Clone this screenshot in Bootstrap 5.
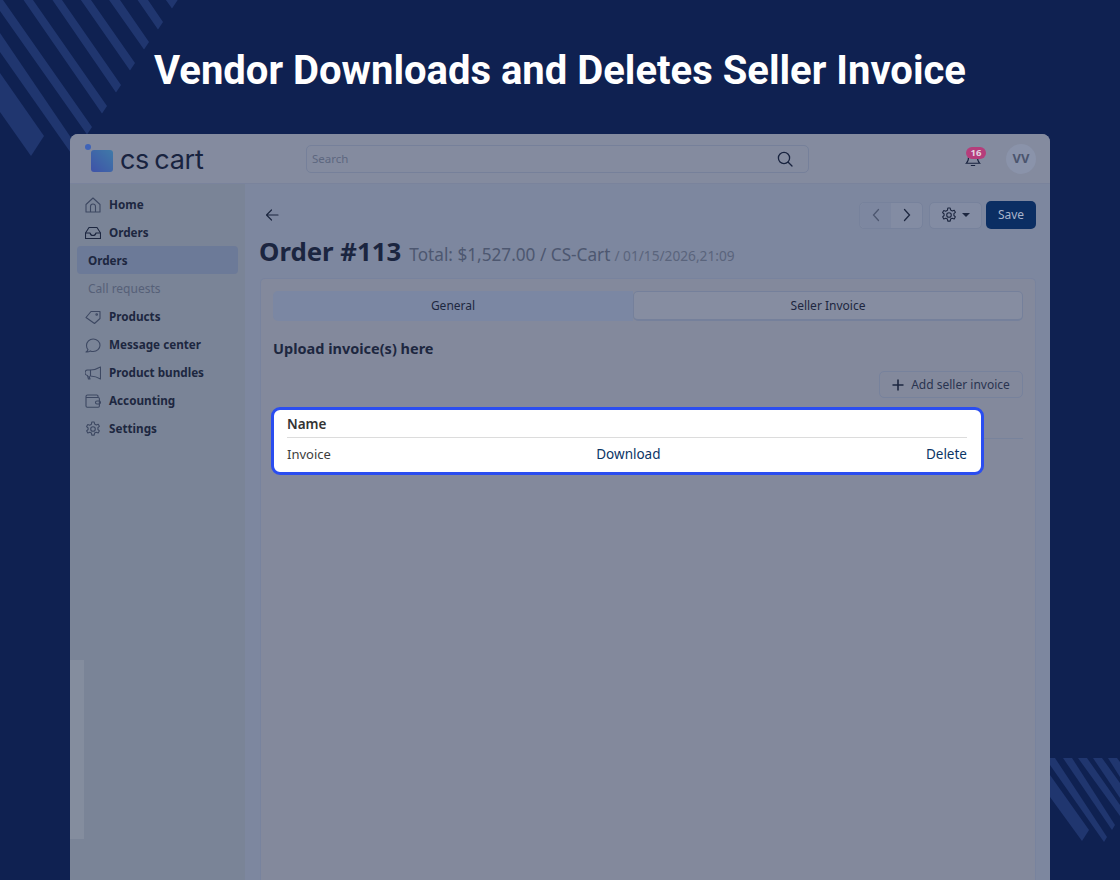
<!DOCTYPE html>
<html lang="en">
<head>
  <meta charset="UTF-8" />
  <meta name="viewport" content="width=device-width, initial-scale=1" />
  <title>Vendor Downloads and Deletes Seller Invoice</title>
  <link href="https://cdn.jsdelivr.net/npm/bootstrap@5.3.0/dist/css/bootstrap.min.css" rel="stylesheet" />
  <style>
    html, body { height: 880px; overflow: hidden; }
    body { background: #0f2151; font-family: "Noto Sans", sans-serif; position: relative; color: #1d2740; }
    svg { display: block; flex: none; }
    .deco { position: absolute; left: 0; top: 0; }
    .deco polygon { fill: #20366f; }

    .page-title { position: relative; font-family: Roboto, sans-serif; font-weight: 700; font-size: 40px; line-height: 48px; color: #fff; text-align: center; margin: 0; padding: 47px 0 39px; }

    .app-window { position: relative; width: 980px; height: 746px; margin-left: 70px; border-radius: 8px 8px 0 0; overflow: hidden; background: #7d879f; }
    .app-top { height: 50px; background: #848b9f; border-bottom: 1px solid #7a839c; padding: 0 14px 0 15px; }
    .brand { width: 221px; }
    .brand-mark { position: relative; width: 28px; height: 30px; margin-right: 8px; }
    .brand-mark i { position: absolute; left: 6px; top: 6px; width: 22px; height: 22px; border-radius: 3px; background: linear-gradient(225deg, #3f7aa8, #3f52a8); }
    .brand-mark b { position: absolute; left: 0; top: 0; width: 6px; height: 6px; border-radius: 50%; background: #3f63b8; }
    .brand-name { font-family: Inter, sans-serif; font-size: 27px; font-weight: 400; letter-spacing: -.3px; line-height: 30px; color: #18233f; word-spacing: -2px; margin-left: -1px; padding-top: 2px; }
    .search-box { width: 503px; height: 28px; border: 1px solid #76809a; border-radius: 5px; padding: 0 15px 0 5px; font-size: 11.5px; color: #5d6780; }
    .bell-wrap { position: relative; margin-right: 25px; }
    .bell-count { position: absolute; left: 1px; top: -3px; width: 20px; height: 12px; border-radius: 6px; background: #b53d7b; color: #e3d5e2; font-size: 9.5px; font-weight: 700; line-height: 12px; text-align: center; }
    .avatar { width: 30px; height: 30px; border-radius: 50%; background: #8a93aa; font-size: 13px; font-weight: 700; color: #4b556e; }

    .app-body { height: 696px; }
    .side { position: relative; width: 175px; background: #7a8497; padding: 6px 7px 0; }
    .side-link { height: 28px; padding-left: 8px; padding-top: 1px; gap: 8px; font-size: 11.7px; font-weight: 700; color: #1d2740; }
    .side-sub { padding-left: 11px; border-radius: 4px; }
    .side-sub.is-active { background: #6c7a98; }
    .side-sub.is-muted { font-weight: 400; color: #566077; font-size: 12px; }
    .scroll-strip { position: absolute; left: 0; top: 476px; width: 14px; height: 179px; background: #848d9e; }

    .content { flex: 1; min-width: 0; padding: 17px 14px 0 15px; }
    .tool-btn { height: 27px; border: 1px solid #77829c; background: #838ca3; color: #1d2740; padding: 0; border-radius: 5px; }
    .pager { width: 64px; }
    .pager span { flex: 1; height: 100%; }
    .pager span:first-child { background: #7d87a0; border-radius: 5px 0 0 5px; }
    .gear-btn { width: 53px; margin: 0 4px 0 6px; gap: 5px; }
    .caret-mark { width: 0; height: 0; border-left: 4px solid transparent; border-right: 4px solid transparent; border-top: 4px solid #1d2740; }
    .save-btn { width: 50px; height: 28px; background: #0b2e63; border: 0; color: #a9b4ca; font-size: 12px; padding: 0; border-radius: 5px; }
    .order-head { margin: 5px 0 10px -1px; height: 34px; white-space: nowrap; }
    .order-no { font-size: 25.8px; font-weight: 700; line-height: 34px; margin: 0 8px 0 0; color: #1b2540; }
    .order-total { font-size: 17.2px; color: #4d5770; }
    .order-date { font-size: 13.7px; color: #5a647c; margin-left: 4px; }

    .panel { height: 620px; border: 1px solid #78839e; border-bottom: 0; border-radius: 5px 5px 0 0; background: #83899c; padding: 12px 12px 0; }
    .tab-row { height: 30px; border-radius: 5px; font-size: 12px; color: #1d2740; }
    .tab-on { width: 360px; background: #7b87a3; border-radius: 5px 0 0 5px; }
    .tab-off { flex: 1; background: #868da1; border: 1px solid #75809b; border-bottom-width: 2px; border-radius: 5px; }
    .upload-title { font-size: 14.5px; font-weight: 700; line-height: 20px; margin: 17px 0 13px; color: #1d2740; }
    .add-btn { width: 144px; height: 27px; border: 1px solid #77829c; border-radius: 5px; gap: 7px; font-size: 12px; color: #2a3450; padding: 0; background: transparent; }
    .row-line { position: relative; height: 41px; border-bottom: 1px solid #78839c; }
    .invoice-focus { position: absolute; left: -2px; right: 39px; top: 9px; height: 68px; background: #fff; border: 3px solid #2a4df0; border-radius: 9px; padding: 0 14px 0 13px; font-size: 13px; color: #3d3d3d; }
    .invoice-head { height: 28px; font-weight: 600; font-size: 13.5px; border-bottom: 1px solid #dcdcdc; color: #333; line-height: 29px; }
    .invoice-row { height: 33px; }
    .invoice-row a { color: #0b3566; font-size: 13.5px; }
  </style>
</head>
<body>
  <svg class="deco" width="1120" height="880" viewBox="0 0 1120 880">
    <!-- top left stripes -->
    <polygon points="161,-24 182,-6 177,1 172,8.6 149,-24" />
    <polygon points="132,-24 148,0 163,22 158,29.6 110,-40" />
    <polygon points="104,-24 120,0 149,42 144,49.6 88,-30" />
    <polygon points="75,-24 91,0 135,63 130,70.6 60,-30" />
    <polygon points="46,-24 62,0 121,85 116,92.6 36,-24" />
    <polygon points="17,-24 33,0 107,106 102,113.6 7,-24" />
    <polygon points="0,-5 3,0 92,127 87,134.6 0,11" />
    <polygon points="0,33 78,148 73,156 0,52" />
    <polygon points="0,73 44,136 31,156 0,112" />
    <!-- bottom right stripes -->
    <polygon points="1050,758 1055,758 1107,837 1104,842 1050,765" />
    <polygon points="1063,758 1072,758 1115,825 1112,830 1063,758" />
    <polygon points="1078,758 1087,758 1120,805 1120,816" />
    <polygon points="1093,758 1102,758 1120,783 1120,798" />
    <polygon points="1108,758 1117,758 1120,762 1120,777" />
    <polygon points="1050,775 1089,830 1082,841 1050,797" />
  </svg>

  <h1 class="page-title">Vendor Downloads and Deletes Seller Invoice</h1>

  <div class="app-window">
    <header class="app-top d-flex align-items-center">
      <div class="brand d-flex align-items-center">
        <div class="brand-mark"><b></b><i></i></div>
        <span class="brand-name">cs cart</span>
      </div>
      <div class="search-box d-flex align-items-center justify-content-between">
        <span>Search</span>
        <svg width="16" height="16" viewBox="0 0 16 16" fill="none" stroke="#18233f" stroke-width="1.3"><circle cx="7" cy="7" r="5.6"/><path d="M11.2 11.2 15 15" stroke-linecap="round"/></svg>
      </div>
      <div class="ms-auto d-flex align-items-center">
        <div class="bell-wrap">
          <svg width="16" height="18" viewBox="0 0 16 18" fill="none" stroke="#18233f" stroke-width="1.1"><path d="M8 2C5.2 2 3.6 4 3.6 6.6c0 4-1.1 5.6-2.2 6.6h13.2c-1.1-1-2.2-2.6-2.2-6.6C12.4 4 10.800 2 8 2Z"/><path d="M6.300 15.500h3.400" stroke-linecap="round"/></svg>
          <span class="bell-count">16</span>
        </div>
        <div class="avatar d-flex align-items-center justify-content-center">VV</div>
      </div>
    </header>

    <div class="app-body d-flex">
      <nav class="side d-flex flex-column">
        <div class="side-link d-flex align-items-center">
          <svg width="16" height="16" viewBox="0 0 16 16" fill="none" stroke="#3d4862" stroke-width="1.1" stroke-linejoin="round"><path d="M1 7.500 8 1l7 6.500V15H1Z"/><path d="M5.500 15V9.500a2.500 2.500 0 0 1 5 0V15"/></svg>
          Home
        </div>
        <div class="side-link d-flex align-items-center">
          <svg width="16" height="16" viewBox="0 0 16 16" fill="none" stroke="#1d2740" stroke-width="1.1" stroke-linejoin="round"><path d="M4 2.500h8L15.500 8v5.500h-15V8Z"/><path d="M.5 8H5c.5 2 1.500 2.500 3 2.500S10.500 10 11 8h4.500"/></svg>
          Orders
        </div>
        <div class="side-link side-sub is-active d-flex align-items-center">Orders</div>
        <div class="side-link side-sub is-muted d-flex align-items-center">Call requests</div>
        <div class="side-link d-flex align-items-center">
          <svg width="16" height="16" viewBox="0 0 16 16" fill="none" stroke="#3d4862" stroke-width="1.1" stroke-linejoin="round"><path d="M1 8.500 6 2.500h9v7l-5.500 5Z"/><circle cx="11.700" cy="5.500" r=".8"/></svg>
          Products
        </div>
        <div class="side-link d-flex align-items-center">
          <svg width="16" height="16" viewBox="0 0 16 16" fill="none" stroke="#3d4862" stroke-width="1.1" stroke-linejoin="round"><path d="M1 15c1-.5 1.800-1.300 2-2.300C2 11.500 1.500 10 1.500 8.500 1.500 4.800 4.500 2 8.200 2S15 4.800 15 8.300s-3 6.200-6.800 6.200c-1 0-2-.2-2.800-.6C4.300 14.700 2.800 15.200 1 15Z"/></svg>
          Message center
        </div>
        <div class="side-link d-flex align-items-center">
          <svg width="16" height="16" viewBox="0 0 16 16" fill="none" stroke="#3d4862" stroke-width="1.1" stroke-linejoin="round"><path d="M15.500 2v12c-3-1.800-6-2.800-10-3V5c4-.2 7-1.200 10-3Z"/><path d="M5.500 5H3a2.500 2.500 0 0 0-.5 5.500l1 3.500H5l-1-3"/></svg>
          Product bundles
        </div>
        <div class="side-link d-flex align-items-center">
          <svg width="16" height="16" viewBox="0 0 16 16" fill="none" stroke="#3d4862" stroke-width="1.1" stroke-linejoin="round"><path d="M13 4.500V3.200c0-.7-.5-1.200-1.200-1.200H2.500C1.500 2 1 2.700 1 3.500V13c0 .7.500 1.200 1.200 1.200h11c.7 0 1.200-.5 1.200-1.200V5.700c0-.7-.5-1.200-1.200-1.200H1.300"/><rect x="10.500" y="8" width="5" height="3" rx="1.500"/></svg>
          Accounting
        </div>
        <div class="side-link d-flex align-items-center">
          <svg width="16" height="16" viewBox="0 0 16 16" fill="none" stroke="#3d4862" stroke-width="1.1" stroke-linejoin="round"><circle cx="8" cy="8" r="2.300"/><path d="M6.800 1h2.400l.4 2 1.700.9 1.900-.7 1.200 2.100-1.500 1.300v1.900l1.500 1.300-1.200 2.100-1.900-.7-1.700.9-.4 2H6.800l-.4-2-1.700-.9-1.900.7-1.200-2.100 1.500-1.300V7l-1.500-1.400 1.200-2.100 1.900.7 1.700-.9Z"/></svg>
          Settings
        </div>
        <div class="scroll-strip"></div>
      </nav>

      <main class="content">
        <div class="d-flex align-items-center justify-content-between">
          <svg class="ms-1" width="16" height="16" viewBox="0 0 16 16" fill="none" stroke="#1d2740" stroke-width="1.200" stroke-linecap="round" stroke-linejoin="round"><path d="M14 8H2.500M7.500 3l-5 5 5 5"/></svg>
          <div class="d-flex align-items-center">
            <div class="tool-btn pager d-flex overflow-hidden">
              <span class="d-flex align-items-center justify-content-center"><svg width="10" height="14" viewBox="0 0 10 14" fill="none" stroke="#4d5770" stroke-width="1.300" stroke-linecap="round"><path d="M7.500 1.500 2.500 7l5 5.500"/></svg></span>
              <span class="d-flex align-items-center justify-content-center"><svg width="10" height="14" viewBox="0 0 10 14" fill="none" stroke="#1d2740" stroke-width="1.300" stroke-linecap="round"><path d="m2.500 1.500 5 5.500-5 5.500"/></svg></span>
            </div>
            <button class="btn tool-btn gear-btn d-flex align-items-center justify-content-center">
              <svg width="16" height="16" viewBox="0 0 16 16" fill="none" stroke="#1d2740" stroke-width="1.100" stroke-linejoin="round"><circle cx="8" cy="8" r="2.300"/><path d="M6.800 1h2.400l.4 2 1.700.9 1.900-.7 1.200 2.100-1.500 1.300v1.900l1.500 1.300-1.200 2.100-1.900-.7-1.700.9-.4 2H6.800l-.4-2-1.700-.9-1.900.7-1.200-2.100 1.500-1.300V7l-1.500-1.400 1.200-2.100 1.900.7 1.700-.9Z"/></svg>
              <span class="caret-mark"></span>
            </button>
            <button class="btn save-btn">Save</button>
          </div>
        </div>

        <div class="order-head d-flex align-items-baseline">
          <h2 class="order-no">Order #113</h2>
          <span class="order-total">Total: $1,527.00 / CS-Cart</span>
          <span class="order-date">/ 01/15/2026,21:09</span>
        </div>

        <section class="panel">
          <div class="tab-row d-flex">
            <div class="tab-on d-flex align-items-center justify-content-center">General</div>
            <div class="tab-off d-flex align-items-center justify-content-center">Seller Invoice</div>
          </div>
          <h5 class="upload-title">Upload invoice(s) here</h5>
          <div class="d-flex justify-content-end">
            <button class="btn add-btn d-flex align-items-center justify-content-center">
              <svg width="12" height="12" viewBox="0 0 12 12" fill="none" stroke="#1d2740" stroke-width="1.600"><path d="M6 .5v11M.5 6h11"/></svg>
              Add seller invoice
            </button>
          </div>
          <div class="row-line">
            <div class="invoice-focus">
              <div class="invoice-head">Name</div>
              <div class="invoice-row d-flex align-items-center justify-content-between">
                <span>Invoice</span>
                <a class="text-decoration-none" href="#">Download</a>
                <a class="text-decoration-none" href="#">Delete</a>
              </div>
            </div>
          </div>
        </section>
      </main>
    </div>
  </div>

  <script src="https://cdn.jsdelivr.net/npm/bootstrap@5.3.0/dist/js/bootstrap.bundle.min.js"></script>
</body>
</html>
